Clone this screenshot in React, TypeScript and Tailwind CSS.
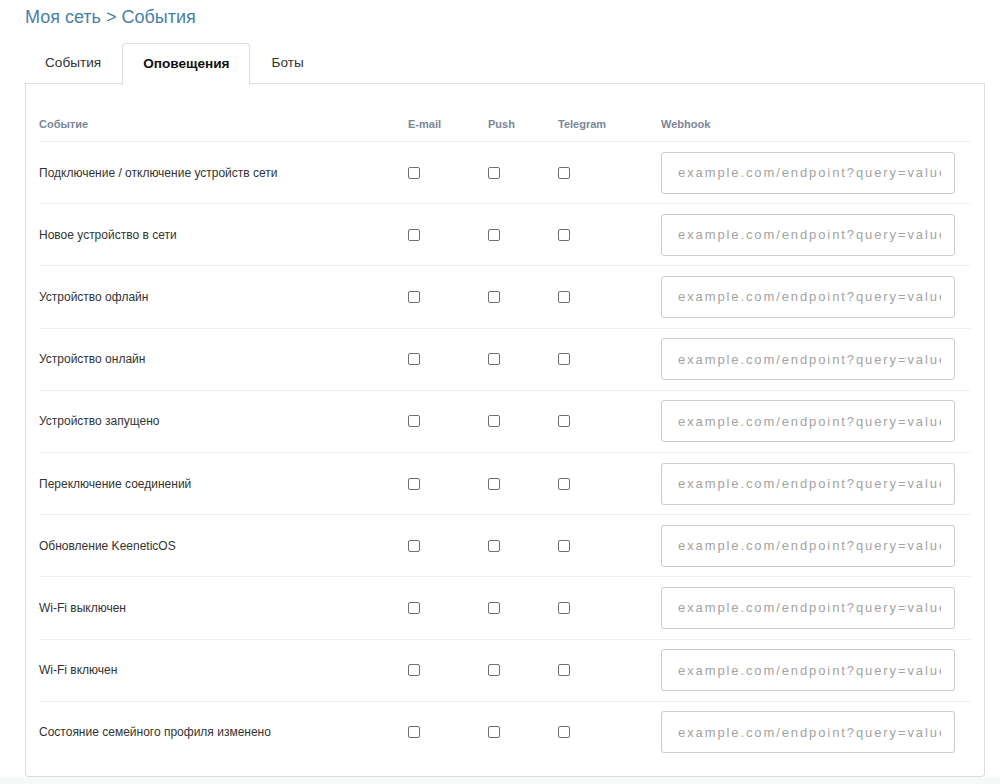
import React from "react";

const events = [
  "Подключение / отключение устройств сети",
  "Новое устройство в сети",
  "Устройство офлайн",
  "Устройство онлайн",
  "Устройство запущено",
  "Переключение соединений",
  "Обновление KeeneticOS",
  "Wi-Fi выключен",
  "Wi-Fi включен",
  "Состояние семейного профиля изменено",
];

function Box() {
  return <span className="block w-[12px] h-[12px] border border-[#6f6f6f] rounded-[2px] bg-white" />;
}

export default function App() {
  return (
    <div className="min-h-[784px] bg-[#f7f8f8] font-['Liberation_Sans',Arial,sans-serif] text-[#333]">
      <div className="bg-white h-[777px] pl-[25px] pr-[15px]">
        <h1 className="pt-[5px] text-[18px] leading-[24px] text-[#4a7fa5]">Моя сеть &gt; События</h1>

        <div className="mt-[14px] -ml-px flex items-end">
          <div className="h-[41px] px-[21px] flex items-center text-[13.6px] text-[#333] border-b border-[#ddd]">
            События
          </div>
          <div className="h-[42px] px-[20px] flex items-center text-[13.6px] font-bold text-[#111] border border-[#ddd] border-b-0 rounded-t-[4px] bg-white -mb-px relative z-10">
            Оповещения
          </div>
          <div className="h-[41px] px-[21px] flex items-center text-[13.6px] text-[#333] border-b border-[#ddd]">
            Боты
          </div>
          <div className="flex-1 h-[41px] border-b border-[#ddd]" />
        </div>

        <div className="border border-t-0 border-[#ddd] rounded-b-[4px] px-[13px] pt-[23px] pb-[13px]">
          <div className="grid grid-cols-[369px_80px_70px_103px_1fr] h-[34px] items-center text-[11px] font-bold text-[#7a8799]">
            <div>Событие</div>
            <div>E-mail</div>
            <div>Push</div>
            <div>Telegram</div>
            <div>Webhook</div>
          </div>
          {events.map((e) => (
            <div
              key={e}
              className="grid grid-cols-[369px_80px_70px_103px_1fr] h-[62.2px] items-center border-t border-[#efefef] text-[12px]"
            >
              <div>{e}</div>
              <div><Box /></div>
              <div><Box /></div>
              <div><Box /></div>
              <div>
                <input
                  type="text"
                  placeholder="example.com/endpoint?query=value"
                  className="w-[294px] h-[42px] border border-[#ccc] rounded-[3px] pl-[16px] pr-[13px] text-[13px] tracking-[1.9px] placeholder:text-[#a3a3a3] outline-none"
                />
              </div>
            </div>
          ))}
        </div>
      </div>
    </div>
  );
}
